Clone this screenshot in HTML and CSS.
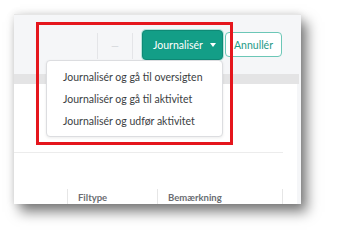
FILE: index.html
```html
<!DOCTYPE html>
<html>
<head lang="da">
	<meta charset="UTF-8">
	<title>Journalisér</title>
	<link rel="stylesheet" href="styles.css">
</head>
<body>
<div class="shot">
	<div class="toolbar">
		<span class="sep"></span>
		<span class="btn_min">&mdash;</span>
		<span class="sep"></span>
		<div class="btn_main">Journalisér <i class="caret"></i></div>
		<div class="btn_cancel">Annullér</div>
	</div>
	<div class="band"></div>
	<div class="main">
		<div class="card">
			<div class="rule"></div>
			<div class="thead">
				<div class="th"></div>
				<div class="th">Filtype</div>
				<div class="th last">Bemærkning</div>
			</div>
		</div>
	</div>

	<ul class="menu">
		<li>Journalisér og gå til oversigten</li>
		<li>Journalisér og gå til aktivitet</li>
		<li>Journalisér og udfør aktivitet</li>
	</ul>
	<div class="mark"></div>
</div>
</body>
</html>
```

FILE: styles.css
```css
*{
	margin:0;
	padding:0;
	box-sizing:border-box;
	font-family:Lato, "Noto Sans", sans-serif;
}
body{
	background:#fff;
	width:337px;
	height:240px;
	overflow:hidden;
}
.shot{
	position:relative;
	margin:14px 0 0 14px;
	width:287px;
	height:190px;
	background:#f5f6f8;
	border-top:1px solid #e6e6e6;
	box-shadow:6px 8px 12px rgba(0,0,0,.5), 0 0 8px rgba(0,0,0,.12);
	overflow:visible;
}
.toolbar{
	height:59px;
	display:flex;
	align-items:center;
	justify-content:flex-end;
	padding-right:19px;
}
.sep{
	width:1px;
	height:26px;
	background:#e4e5e8;
	margin-top:2px;
}
.btn_min{
	width:34px;
	text-align:center;
	color:#cfd2d6;
	font-size:10px;
}
.btn_main{
	margin-left:9px;
	width:81px;
	height:30px;
	border-radius:4px;
	background:#139e87;
	border:1px solid #0f8a76;
	box-shadow:0 0 0 1px #b5e3da;
	color:#fff;
	font-size:10.5px;
	display:flex;
	align-items:center;
	padding-left:10px;
}
.caret{
	margin-left:7px;
	width:0;
	height:0;
	border-left:3.5px solid transparent;
	border-right:3.5px solid transparent;
	border-top:4px solid #fff;
}
.btn_cancel{
	margin-left:2px;
	width:57px;
	height:25px;
	border:1px solid #6cc7b7;
	border-radius:4px;
	background:#fff;
	color:#1f9a86;
	font-size:10.5px;
	display:flex;
	align-items:center;
	justify-content:center;
}
.band{
	height:10px;
	margin-right:2px;
	background:#e4e4e5;
}
.main{
	height:120px;
	padding-right:4px;
}
.card{
	width:283px;
	height:120px;
	background:#fff;
	overflow:hidden;
}
.rule{
	margin-top:68px;
	width:269px;
	border-top:1px solid #ececec;
}
.thead{
	margin-top:36px;
	display:grid;
	grid-template-columns:53px 90px 126px;
	height:16px;
}
.th{
	font-size:9.5px;
	font-weight:bold;
	color:#6a6d72;
	padding:3px 0 0 10px;
	line-height:12px;
}
.th + .th{
	border-left:1px solid #e6e6e6;
}
.th.last{
	border-right:1px solid #e6e6e6;
}
.menu{
	position:absolute;
	left:32px;
	top:45px;
	width:177px;
	height:77px;
	list-style:none;
	background:#fff;
	border:1px solid #dcdde0;
	border-radius:4px;
	box-shadow:0 1px 3px rgba(0,0,0,.08);
	padding-top:5px;
}
.menu li{
	height:22px;
	line-height:22px;
	padding-left:16px;
	font-size:10.5px;
	color:#3b3e42;
}
.mark{
	position:absolute;
	left:22px;
	top:7px;
	width:197px;
	height:123px;
	border:3px solid #e5161d;
}
```
